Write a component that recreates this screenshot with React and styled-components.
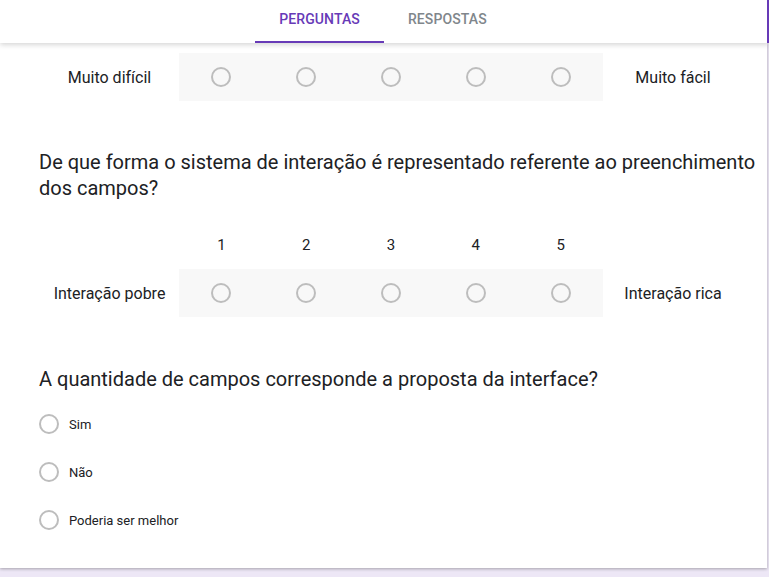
import React from "react";
import styled, { createGlobalStyle } from "styled-components";

const Global = createGlobalStyle`
  html, body { margin: 0; padding: 0; }
  body {
    background: #ede7f6;
    font-family: Roboto, "Liberation Sans", Arial, sans-serif;
    color: #202124;
    overflow: hidden;
  }
`;

const Page = styled.div`
  width: 769px;
  height: 577px;
  display: flex;
  flex-direction: column;
`;

const Header = styled.header`
  position: relative;
  z-index: 2;
  height: 43px;
  background: #fff;
  border-right: 2px solid #673ab7;
  box-shadow: 0 2px 5px rgba(0, 0, 0, 0.16);
  display: flex;
  justify-content: center;
  padding-right: 1px;
`;

const Tab = styled.div`
  height: 43px;
  box-sizing: border-box;
  padding: 11px 24px 0;
  font-size: 14px;
  font-weight: 500;
  letter-spacing: 0.1px;
  color: ${(p) => (p.$active ? "#673ab7" : "#80868b")};
  border-bottom: 2px solid ${(p) => (p.$active ? "#673ab7" : "transparent")};
`;

const Card = styled.main`
  width: 767px;
  box-sizing: border-box;
  background: #fff;
  padding: 10px 8px 24px 39px;
  box-shadow: 0 1px 3px rgba(0, 0, 0, 0.3);
`;

const Question = styled.section`
  margin-top: ${(p) => p.$gap || 0}px;
`;

const Title = styled.h2`
  margin: 0;
  font-size: 20px;
  font-weight: 400;
  line-height: 26px;
  color: #202124;
`;

const Grid = styled.div`
  width: 703px;
  margin: ${(p) => p.$top || 0}px 0 0 1px;
  display: grid;
  grid-template-columns: 139px repeat(5, 1fr) 140px;
`;

const Cell = styled.div`
  height: 48px;
  display: flex;
  align-items: center;
  justify-content: center;
  font-size: ${(p) => (p.$num ? "15px" : "16px")};
  background: ${(p) => (p.$band ? "#f8f8f8" : "transparent")};
`;

const Radio = styled.span`
  width: 20px;
  height: 20px;
  box-sizing: border-box;
  border: 2px solid #bdbdbd;
  border-radius: 50%;
  flex: none;
`;

const Options = styled.div`
  margin-top: 8px;
  display: flex;
  flex-direction: column;
`;

const Option = styled.label`
  height: 48px;
  display: flex;
  align-items: center;
  gap: 10px;
  font-size: 13px;
  color: #202124;
`;

const points = [1, 2, 3, 4, 5];

function Scale({ low, high, numbers, top }) {
  return (
    <Grid $top={top}>
      {numbers && (
        <>
          <Cell />
          {points.map((n) => (
            <Cell key={n} $num>
              {n}
            </Cell>
          ))}
          <Cell />
        </>
      )}
      <Cell>{low}</Cell>
      {points.map((n) => (
        <Cell key={n} $band>
          <Radio />
        </Cell>
      ))}
      <Cell>{high}</Cell>
    </Grid>
  );
}

export default function App() {
  return (
    <>
      <Global />
      <Page>
        <Header>
          <Tab $active>PERGUNTAS</Tab>
          <Tab>RESPOSTAS</Tab>
        </Header>
        <Card>
          <Scale low="Muito difícil" high="Muito fácil" />
          <Question $gap={48}>
            <Title>
              De que forma o sistema de interação é representado referente ao
              preenchimento dos campos?
            </Title>
            <Scale low="Interação pobre" high="Interação rica" numbers top={20} />
          </Question>
          <Question $gap={49}>
            <Title>A quantidade de campos corresponde a proposta da interface?</Title>
            <Options>
              {["Sim", "Não", "Poderia ser melhor"].map((o) => (
                <Option key={o}>
                  <Radio />
                  {o}
                </Option>
              ))}
            </Options>
          </Question>
        </Card>
      </Page>
    </>
  );
}
